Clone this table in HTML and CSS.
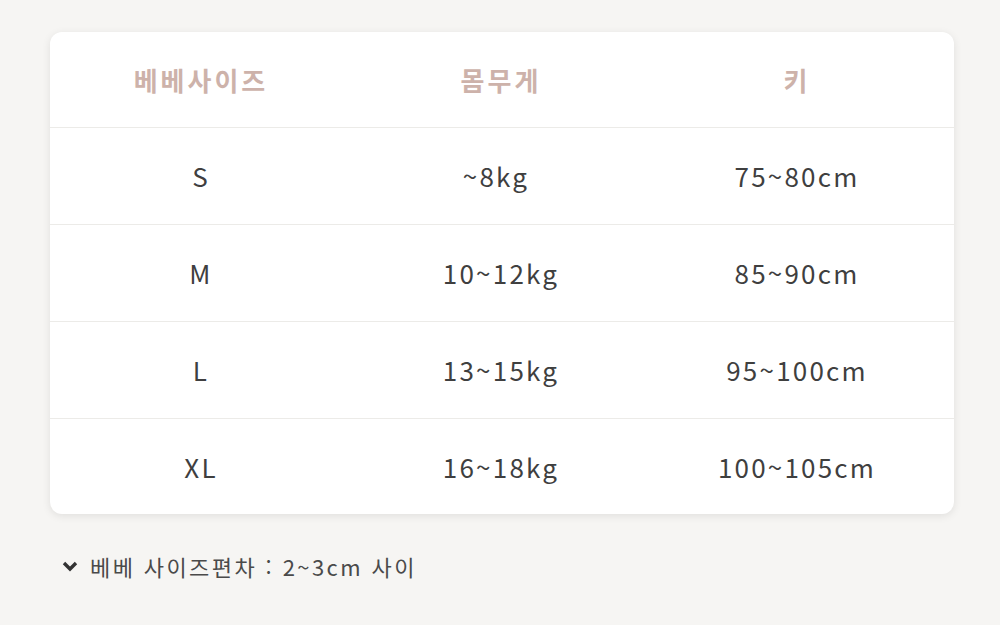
FILE: index.html
```html
<!DOCTYPE html>
<html lang="ko">
<head>
<meta charset="utf-8">
<link rel="stylesheet" href="styles.css">
</head>
<body>
<div class="page">
  <div class="card">
    <div class="row head">
      <div class="cell">베베사이즈</div>
      <div class="cell">몸무게</div>
      <div class="cell">키</div>
    </div>
    <div class="row">
      <div class="cell">S</div>
      <div class="cell shift-l">~8kg</div>
      <div class="cell">75~80cm</div>
    </div>
    <div class="row">
      <div class="cell">M</div>
      <div class="cell">10~12kg</div>
      <div class="cell">85~90cm</div>
    </div>
    <div class="row">
      <div class="cell">L</div>
      <div class="cell">13~15kg</div>
      <div class="cell">95~100cm</div>
    </div>
    <div class="row last">
      <div class="cell">XL</div>
      <div class="cell">16~18kg</div>
      <div class="cell">100~105cm</div>
    </div>
  </div>
  <p class="note">
    <svg class="chev" width="16" height="12" viewBox="0 0 16 12"><polyline points="2,3 8,9 14,3" fill="none" stroke="#333" stroke-width="3.4" stroke-linejoin="miter"/></svg>
    <span>베베 사이즈편차 : 2~3cm 사이</span>
  </p>
</div>
</body>
</html>
```
FILE: styles.css
```css
html, body {
  margin: 0;
  padding: 0;
  background: #f6f5f3;
  width: 1000px;
  height: 625px;
  overflow: hidden;
}
.page {
  padding: 32px 46px 0 50px;
  font-family: "Noto Sans CJK KR", "Noto Sans", sans-serif;
}
.card {
  background: #ffffff;
  border-radius: 12px;
  box-shadow: 0 2px 8px rgba(0, 0, 0, 0.09);
  width: 904px;
}
.row {
  display: grid;
  grid-template-columns: 300px 300px 292px;
  height: 97px;
  border-bottom: 1px solid #ecebe8;
  box-sizing: border-box;
  align-items: center;
  color: #3f3f3f;
  font-size: 26px;
  letter-spacing: 2.2px;
}
.row.head {
  height: 96px;
  color: #cdb2aa;
  font-weight: 700;
  font-size: 26px;
  letter-spacing: 3px;
}
.row.last {
  border-bottom: none;
  height: 95px;
}
.cell {
  text-align: center;
  line-height: 1;
  padding-left: 2px;
}
.shift-l {
  padding-right: 10px;
}
.note {
  margin: 36px 0 0 12px;
  display: flex;
  align-items: center;
  gap: 12px;
  font-size: 22px;
  letter-spacing: 2.4px;
  color: #4a4a4a;
}
.chev {
  display: block;
}
```
